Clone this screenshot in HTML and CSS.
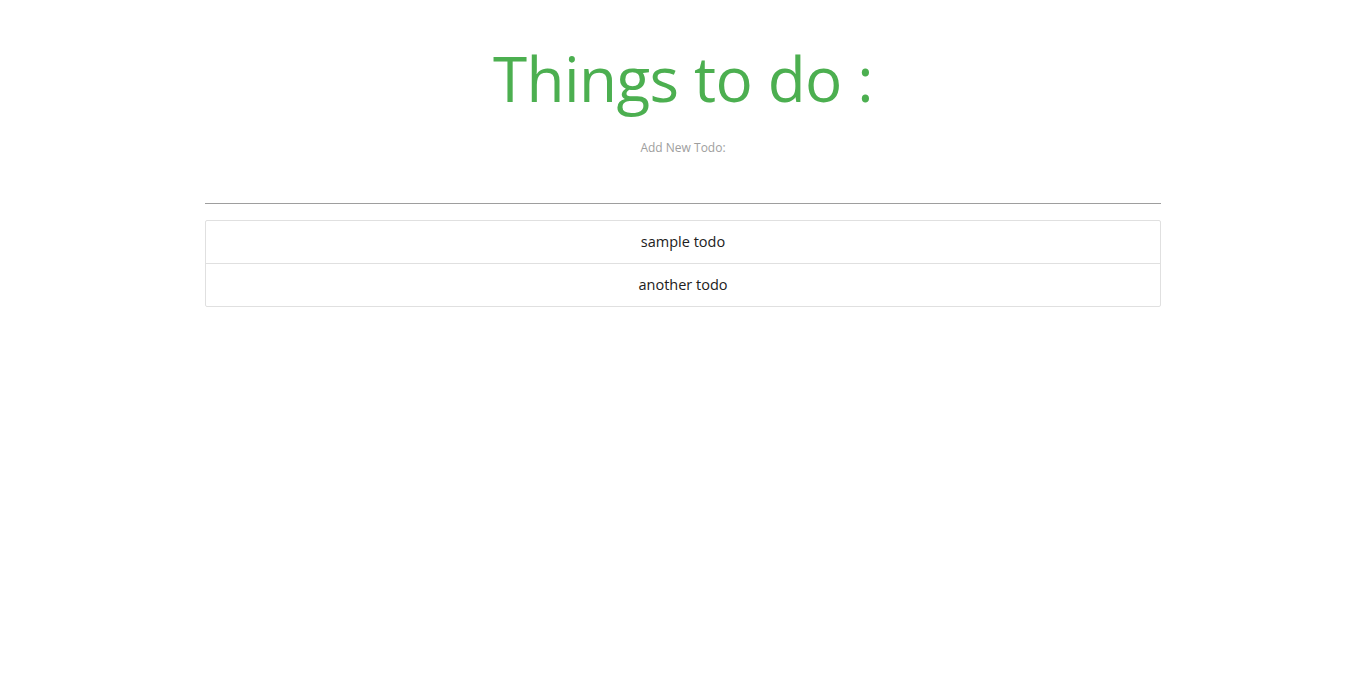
FILE: index.html
```html
<!DOCTYPE html>
<html lang="en">
<head>
<meta charset="utf-8">
<title>Todo</title>
<link rel="stylesheet" href="styles.css">
</head>
<body>
<div class="container">
  <h1 class="title">Things to do :</h1>
  <form class="add-form">
    <label class="add-label" for="newTodo">Add New Todo:</label>
    <input class="add-input" id="newTodo" type="text">
  </form>
  <ul class="todo-list">
    <li class="todo-item">sample todo</li>
    <li class="todo-item">another todo</li>
  </ul>
</div>
</body>
</html>
```
FILE: styles.css
```css
html, body {
  margin: 0;
  padding: 0;
  background: #ffffff;
}
body {
  font-family: "Open Sans", "Noto Sans", sans-serif;
  color: rgba(0, 0, 0, 0.87);
}
.container {
  width: 956px;
  margin: 0 auto;
}
.title {
  margin: 0;
  padding-top: 38px;
  text-align: center;
  color: #4caf50;
  font-weight: 400;
  font-size: 62px;
  line-height: 80px;
  letter-spacing: -0.6px;
}
.add-form {
  margin: 0;
  padding-top: 21px;
}
.add-label {
  display: block;
  text-align: center;
  font-size: 12px;
  line-height: 18px;
  color: #9e9e9e;
}
.add-input {
  display: block;
  box-sizing: border-box;
  width: 100%;
  height: 47px;
  margin: 0;
  padding: 0;
  border: none;
  border-bottom: 1px solid #9e9e9e;
  outline: none;
  background: transparent;
  font: inherit;
}
.todo-list {
  margin: 16px 0 0 0;
  padding: 0;
  list-style: none;
  border: 1px solid #e0e0e0;
  border-radius: 2px;
}
.todo-item {
  height: 42px;
  line-height: 42px;
  text-align: center;
  font-size: 14.5px;
  color: #212121;
  border-bottom: 1px solid #e0e0e0;
}
.todo-item:last-child {
  border-bottom: none;
}
```
